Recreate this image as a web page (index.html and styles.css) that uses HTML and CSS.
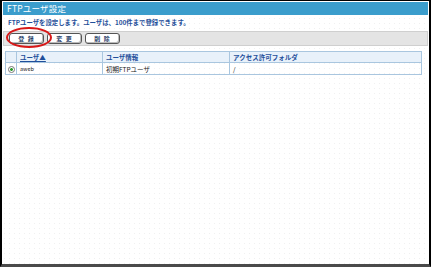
FILE: index.html
```html
<!DOCTYPE html>
<html lang="ja">
<head>
  <meta charset="UTF-8" />
  <title>FTPユーザ設定</title>
  <link rel="stylesheet" href="styles.css">
</head>
<body>
  <div class="frame">
    <div class="titlebar">FTPユーザ設定</div>
    <p class="desc">FTPユーザを設定します。ユーザは、100件まで登録できます。</p>
    <div class="toolbar">
      <button class="btn">登 録</button>
      <button class="btn">変 更</button>
      <button class="btn">削 除</button>
      <span class="mark"></span>
    </div>
    <table class="list">
      <tr>
        <th class="sel"></th>
        <th class="c-user"><a href="#">ユーザ▲</a></th>
        <th class="c-info">ユーザ情報</th>
        <th>アクセス許可フォルダ</th>
      </tr>
      <tr>
        <td class="sel"><span class="radio"></span></td>
        <td class="small">aweb</td>
        <td>初期FTPユーザ</td>
        <td>/</td>
      </tr>
    </table>
  </div>
</body>
</html>
```

FILE: styles.css
```css
body {
  margin: 0;
  background: #fff;
  font-family: "Noto Sans CJK JP", "Noto Sans", sans-serif;
}
.frame {
  position: relative;
  width: 425px;
  height: 262px;
  border-left: 2px solid #000;
  border-top: 1px solid #000;
  border-right: 2px solid #000;
  border-bottom: 3px solid #4a4a4a;
  padding: 1px 1px 0 1px;
  background-color: #fff;
  background-image: radial-gradient(circle, #f0f0f0 0.6px, transparent 0.9px);
  background-size: 5px 5px;
}
.titlebar {
  height: 13px;
  line-height: 13px;
  background: #3b9dcc;
  color: #fff;
  font-size: 8.5px;
  padding-left: 4px;
  letter-spacing: 0.2px;
}
.desc {
  margin: 3px 0 0 5px;
  height: 10px;
  line-height: 10px;
  font-size: 6.4px;
  font-weight: bold;
  color: #1f4f9a;
}
.toolbar {
  margin-top: 3px;
  height: 13px;
  background: #e4e4e4;
  border: 1px solid #cfcfcf;
  display: flex;
  align-items: center;
  gap: 3px;
  padding-left: 5px;
}
.btn {
  width: 35px;
  height: 11px;
  padding: 0;
  border: 1px solid #555;
  border-radius: 3px;
  background: #fff;
  box-shadow: inset -1px -1px 0 #bbb;
  color: #2a3f6a;
  font-family: inherit;
  font-size: 6px;
  font-weight: bold;
  line-height: 9px;
  letter-spacing: 1px;
}
.mark {
  position: absolute;
  left: 4px;
  top: 26px;
  width: 42px;
  height: 17px;
  border: 2px solid #d81818;
  border-radius: 50%;
}
.list {
  margin: 5px 0 0 2px;
  width: 417px;
  border-collapse: collapse;
  font-size: 6.5px;
}
.list th,
.list td {
  border: 1px solid #a9c6df;
  height: 9px;
  padding: 0 0 0 3px;
  text-align: left;
  white-space: nowrap;
}
.list th {
  background: #e8f1fa;
  color: #1f4f9a;
  font-weight: bold;
}
.list th a {
  color: #1f4f9a;
  text-decoration: underline;
}
.list td {
  height: 11px;
  color: #222;
}
.list .sel {
  width: 10px;
  padding: 0;
  text-align: center;
}
.c-user {
  width: 82px;
}
.c-info {
  width: 123px;
}
.small {
  font-size: 5.5px;
  color: #444;
}
.radio {
  display: inline-block;
  width: 5px;
  height: 5px;
  border: 1px solid #777;
  border-radius: 50%;
  background: radial-gradient(circle, #2a9a2a 1.2px, #fff 1.6px);
  vertical-align: middle;
}
```
